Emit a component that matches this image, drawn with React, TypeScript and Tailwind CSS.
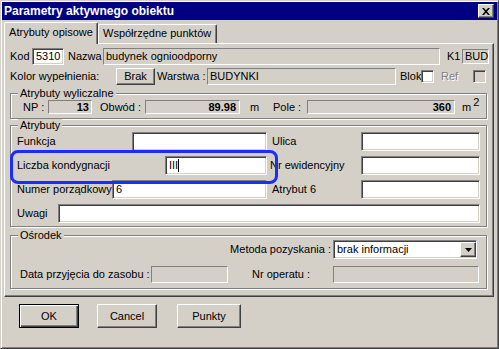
import React from 'react';

// classic win9x bevels
const sunken2 =
  'border border-t-[#808080] border-l-[#808080] border-b-white border-r-white shadow-[inset_1px_1px_0_#404040,inset_-1px_-1px_0_#d4d0c8]';
const sunken1 = 'border border-t-[#808080] border-l-[#808080] border-b-white border-r-white';
const raised =
  'border border-t-white border-l-white border-r-[#404040] border-b-[#404040] shadow-[inset_-1px_-1px_0_#808080]';

function Edit({ className, children }: { className: string; children?: React.ReactNode }) {
  return <div className={`flex items-center pl-[3px] bg-white whitespace-nowrap ${sunken2} ${className}`}>{children}</div>;
}

function Static({ className, children }: { className: string; children?: React.ReactNode }) {
  return <div className={`flex items-center px-[2px] bg-[#d4d0c8] whitespace-nowrap ${sunken1} ${className}`}>{children}</div>;
}

function Btn({ className, children }: { className: string; children: React.ReactNode }) {
  return <div className={`flex items-center justify-center bg-[#d4d0c8] ${raised} ${className}`}>{children}</div>;
}

function Check({ disabled }: { disabled?: boolean }) {
  return <div className={`w-[13px] h-[13px] shrink-0 ${disabled ? 'bg-[#d4d0c8]' : 'bg-white'} ${sunken2}`} />;
}

function Group({ title, className, children }: { title: string; className: string; children: React.ReactNode }) {
  return (
    <div className={`relative ml-[5px] w-[477px] border border-[#808080] shadow-[inset_1px_1px_0_#fff,1px_1px_0_#fff] ${className}`}>
      <span className="absolute left-[7px] top-[-7px] px-[2px] bg-[#d4d0c8] leading-[13px]">{title}</span>
      {children}
    </div>
  );
}

export default function App() {
  return (
    <div className="relative w-[499px] h-[349px] overflow-hidden bg-[#d4d0c8] border border-t-[#d4d0c8] border-l-[#d4d0c8] border-r-[#404040] border-b-[#404040] shadow-[inset_1px_1px_0_#fff,inset_-1px_-1px_0_#808080] p-[1px] text-[11px] leading-[13px] text-black font-['Liberation_Sans',Arial,sans-serif]">
      {/* title bar */}
      <div className="h-[18px] bg-[#000080] flex items-center justify-between pl-[2px] pr-[3px]">
        <span className="text-white font-bold text-[12px]">Parametry aktywnego obiektu</span>
        <Btn className="w-[16px] h-[14px]">
          <svg width="8" height="7" viewBox="0 0 8 7">
            <path d="M0 0h2l2 2.2L6 0h2L5 3.5 8 7H6L4 4.8 2 7H0l3-3.5z" fill="#000" />
          </svg>
        </Btn>
      </div>

      {/* tabs */}
      <div className="flex items-end h-[23px] pl-[2px]">
        <div className="relative z-10 w-[94px] h-[22px] -mb-[1px] bg-[#d4d0c8] border-t border-l border-r border-t-white border-l-white border-r-[#404040] shadow-[inset_-1px_0_0_#808080] rounded-t-[2px] flex justify-center pt-[3px]">
          Atrybuty opisowe
        </div>
        <div className="w-[119px] h-[19px] border-t border-l border-r border-t-white border-l-white border-r-[#404040] shadow-[inset_-1px_0_0_#808080] rounded-t-[2px] pt-[2px] pl-[4px]">
          Współrzędne punktów
        </div>
      </div>

      {/* panel */}
      <div className={`w-[490px] h-[254px] ml-[2px] flex flex-col ${raised}`}>
        <div className="flex items-center h-[17px] mt-[4px] pl-[5px] whitespace-nowrap">
          <span className="w-[22px]">Kod</span>
          <Edit className="w-[32px] h-[17px]">5310</Edit>
          <span className="w-[35px] ml-[4px]">Nazwa</span>
          <Static className="w-[337px] h-[17px]">budynek ognioodporny</Static>
          <span className="w-[15px] ml-[7px]">K1</span>
          <Static className="w-[27px] h-[15px]">BUD</Static>
        </div>

        <div className="flex items-center h-[17px] mt-[3px] pl-[5px] whitespace-nowrap">
          <span className="w-[106px]">Kolor wypełnienia:</span>
          <Btn className="w-[39px] h-[17px]">Brak</Btn>
          <span className="w-[50px] ml-[2px]">Warstwa :</span>
          <Static className="w-[189px] h-[17px]">BUDYNKI</Static>
          <span className="w-[21px] ml-[4px]">Blok</span>
          <Check />
          <span className="w-[32px] ml-[7px] text-[#808080] [text-shadow:1px_1px_0_#fff]">Ref</span>
          <Check disabled />
        </div>

        <Group title="Atrybuty wyliczalne" className="mt-[8px] h-[26px]">
          <div className="flex items-center h-[14px] mt-[6px] pl-[12px] whitespace-nowrap">
            <span className="w-[25px]">NP :</span>
            <Static className="w-[44px] h-[14px] justify-end font-bold">13</Static>
            <span className="w-[45px] ml-[8px]">Obwód :</span>
            <Static className="w-[95px] h-[14px] justify-end font-bold pr-[3px]">89.98</Static>
            <span className="w-[23px] ml-[10px]">m</span>
            <span className="w-[34px]">Pole :</span>
            <Static className="w-[148px] h-[14px] justify-end font-bold pr-[3px]">360</Static>
            <span className="ml-[7px]">m</span>
            <span className="ml-[2px] align-super relative -top-[5px]">2</span>
          </div>
        </Group>

        <Group title="Atrybuty" className="mt-[6px] h-[102px]">
          <div className="flex flex-col gap-[5px] pt-[6px] pl-[6px] whitespace-nowrap">
            <div className="flex items-center h-[19px]">
              <span className="w-[115px]">Funkcja</span>
              <Edit className="w-[135px] h-[19px]" />
              <span className="w-[89px] ml-[5px]">Ulica</span>
              <Edit className="w-[119px] h-[19px]" />
            </div>
            <div className="flex items-center h-[19px]">
              <span className="w-[148px]">Liczba kondygnacji</span>
              <Edit className="w-[102px] h-[19px]">
                III<span className="w-[1px] h-[13px] bg-black" />
              </Edit>
              <span className="w-[91px] ml-[3px]">Nr ewidencyjny</span>
              <Edit className="w-[119px] h-[19px]" />
            </div>
            <div className="flex items-center h-[19px]">
              <span className="w-[95px]">Numer porządkowy</span>
              <Edit className="w-[155px] h-[19px]">6</Edit>
              <span className="w-[89px] ml-[5px]">Atrybut 6</span>
              <Edit className="w-[119px] h-[19px]" />
            </div>
            <div className="flex items-center h-[19px]">
              <span className="w-[41px]">Uwagi</span>
              <Edit className="w-[422px] h-[19px]" />
            </div>
          </div>
        </Group>

        <Group title="Ośrodek" className="mt-[8px] h-[54px]">
          <div className="flex items-center h-[19px] mt-[4px] whitespace-nowrap">
            <span className="w-[320px] text-right">Metoda pozyskania :</span>
            <Edit className="w-[144px] h-[19px] ml-[2px] justify-between">
              brak informacji
              <Btn className="w-[16px] h-[15px]">
                <svg width="7" height="4" viewBox="0 0 7 4">
                  <path d="M0 0h7L3.5 4z" fill="#000" />
                </svg>
              </Btn>
            </Edit>
          </div>
          <div className="flex items-center h-[17px] mt-[7px] pl-[9px] whitespace-nowrap">
            <span className="w-[131px]">Data przyjęcia do zasobu :</span>
            <Static className="w-[77px] h-[17px]" />
            <span className="w-[81px] ml-[24px]">Nr operatu :</span>
            <Static className="w-[146px] h-[17px]" />
          </div>
        </Group>
      </div>

      {/* buttons */}
      <div className="flex mt-[7px] pl-[17px]">
        <div className="w-[60px] h-[24px] flex items-center justify-center border border-black shadow-[inset_1px_1px_0_#fff,inset_-1px_-1px_0_#404040,inset_-2px_-2px_0_#808080]">
          OK
        </div>
        <Btn className="w-[60px] h-[24px] ml-[18px]">Cancel</Btn>
        <Btn className="w-[64px] h-[24px] ml-[20px]">Punkty</Btn>
      </div>

      {/* highlight drawn over the form */}
      <div className="absolute left-[9px] top-[149px] w-[268px] h-[34px] border-[3px] border-[#1a2cff] rounded-[8px] pointer-events-none" />
    </div>
  );
}
